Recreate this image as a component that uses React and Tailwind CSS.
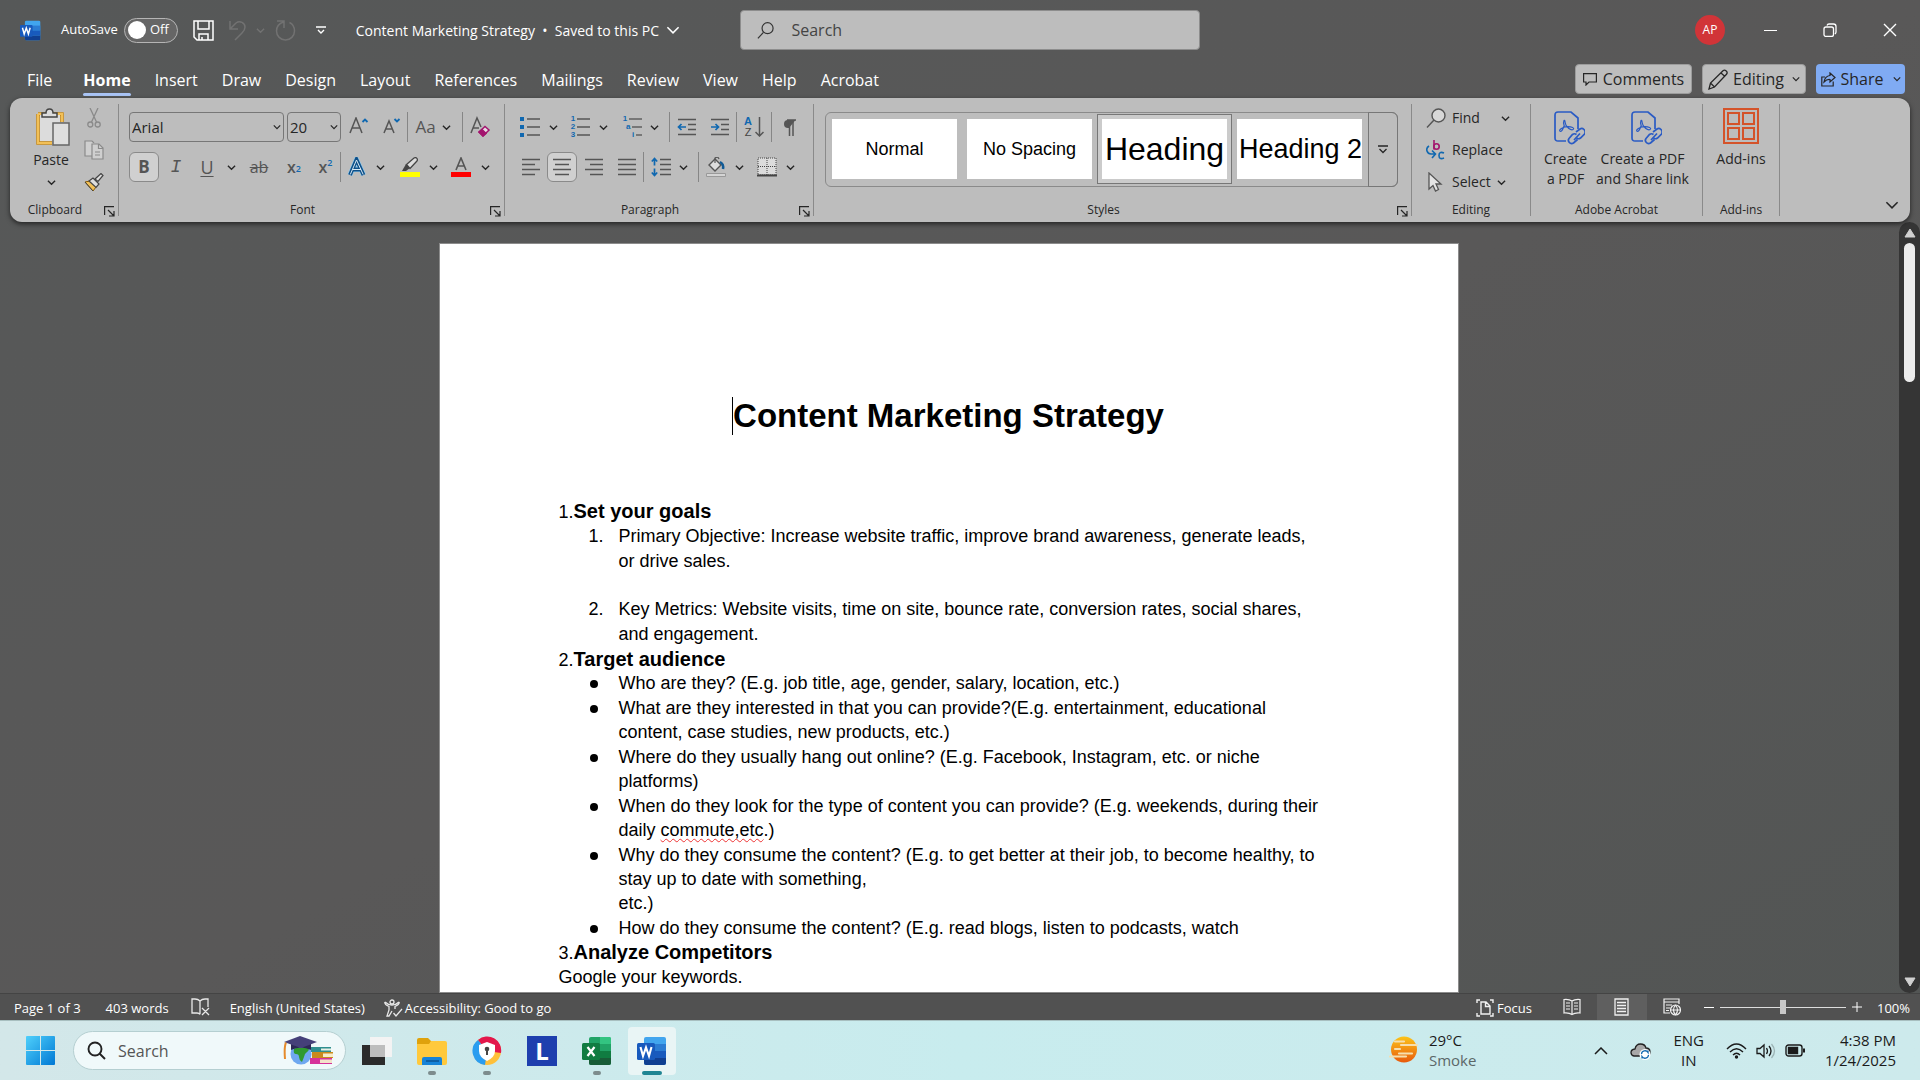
import React from "react";

const UI = "font-['Open_Sans','Noto_Sans',sans-serif]";
const DOC = "font-['Liberation_Sans',Arial,sans-serif]";

function Chevron({ className = "text-[#262626]", size = 9, stroke = 1.5 }) {
  return (
    <svg width={size} height={size} viewBox="0 0 10 10" className={`shrink-0 ${className}`} fill="none" stroke="currentColor" strokeWidth={stroke} aria-hidden="true">
      <path d="M1 3l4 4 4-4" />
    </svg>
  );
}

function Cell({ label, className = "w-8", children }) {
  return (
    <button type="button" aria-label={label} className={`flex h-[30px] shrink-0 items-center justify-center ${className}`}>
      {children}
    </button>
  );
}

function Rule({ className = "" }) {
  return <span className={`h-[30px] w-px shrink-0 bg-[#868686] ${className}`} />;
}

function Group({ title, launcher, className, children }) {
  return (
    <section aria-label={title} className={`flex h-28 shrink-0 flex-col justify-between border-r border-[#8a8a8a] ${className}`}>
      {children}
      <footer className="flex h-[13px] items-center text-xs leading-[14px]">
        <span className={`flex-1 text-center ${launcher ? "pr-1" : ""}`}>{title}</span>
        {launcher && (
          <button type="button" aria-label={`${title} settings`} className="mr-[2px] flex h-[14px] w-3 items-end">
            <svg width="11" height="11" viewBox="0 0 11 11" fill="none" stroke="#262626" strokeWidth="1.2">
              <path d="M.6 9V.6H10M4 4l5.5 5.5M10 5v5H5" />
            </svg>
          </button>
        )}
      </footer>
    </section>
  );
}

function Lines({ rows }) {
  return (
    <svg width="20" height="20" viewBox="0 0 20 20" stroke="#555" strokeWidth="1.5" aria-hidden="true">
      {rows.map(([a, b], i) => (
        <path key={i} d={`M${a} ${2.5 + i * 5}H${b}`} />
      ))}
    </svg>
  );
}

function WordLogo({ size }) {
  return (
    <svg width={size} height={size} viewBox="0 0 30 30" aria-hidden="true">
      <rect x="7" y="1" width="22" height="28" rx="2" fill="#41a5ee" />
      <path d="M7 8h22v7H7z" fill="#2b7cd3" />
      <path d="M7 15h22v7H7z" fill="#185abd" />
      <path d="M7 22h22v5a2 2 0 0 1-2 2H9a2 2 0 0 1-2-2z" fill="#103f91" />
      <rect x="0" y="7" width="18" height="17" rx="1.500" fill="#185abd" />
      <path d="M3.500 11l2.500 9L9 11.500l3 8.500 2.500-9" fill="none" stroke="#fff" strokeWidth="2.100" />
    </svg>
  );
}

function ExcelLogo() {
  return (
    <svg width="30" height="30" viewBox="0 0 30 30" aria-hidden="true">
      <rect x="7" y="1" width="22" height="28" rx="2" fill="#21a366" />
      <path d="M18 1h9a2 2 0 0 1 2 2v5H18z" fill="#33c481" />
      <path d="M7 8h11v7H7z" fill="#107c41" />
      <path d="M18 15h11v7H18z" fill="#107c41" />
      <path d="M7 15h11v7h11v5a2 2 0 0 1-2 2H9a2 2 0 0 1-2-2z" fill="#185c37" />
      <rect x="0" y="7" width="18" height="17" rx="1.500" fill="#107c41" />
      <path d="M5.500 11l7 9M12.500 11l-7 9" stroke="#fff" strokeWidth="2.200" />
    </svg>
  );
}

function TitleBar() {
  return (
    <header className="grid h-[60px] grid-cols-[740px_minmax(200px,460px)_1fr] items-center text-white">
      <div className="flex items-center pl-5">
        <WordLogo size={21} />
        <label className="ml-5 flex items-center gap-[6px] text-[13px]">
          AutoSave
          <span className="flex h-[25px] w-[54px] items-center justify-between rounded-full border border-[#b5b5b5] bg-[#666] pr-2 pl-[3px]">
            <input type="checkbox" className="h-[18px] w-[18px] appearance-none rounded-full bg-white" />
            <span>Off</span>
          </span>
        </label>
        <button type="button" aria-label="Save" className="ml-[15px]">
          <svg width="21" height="21" viewBox="0 0 21 21" fill="none" stroke="#fff" strokeWidth="1.500">
            <path d="M1 1h19v19H4l-3-3zM5 1v8h11V1M6 20v-6h9v6M9 20v-3" />
          </svg>
        </button>
        <button type="button" aria-label="Undo" className="ml-[14px] flex items-center gap-2">
          <svg width="20" height="21" viewBox="0 0 20 21" fill="none" stroke="#727272" strokeWidth="1.500">
            <path d="M2 1v8h8M2 9l6-6c4-3 9 0 9 4 0 3-1 4-3 6l-7 7" />
          </svg>
          <Chevron className="text-[#727272]" />
        </button>
        <button type="button" aria-label="Redo" className="ml-[10px]">
          <svg width="21" height="21" viewBox="0 0 21 21" fill="none" stroke="#727272" strokeWidth="1.500">
            <path d="M2 1h7v7M8.500 2C4 3.500 1.500 7 1.500 11a9 9 0 0 0 18 0c0-4-2-7-5-8.500" />
          </svg>
        </button>
        <button type="button" aria-label="Customize toolbar" className="ml-5">
          <svg width="10" height="9" viewBox="0 0 10 9" fill="none" stroke="#fff" strokeWidth="1.400">
            <path d="M0 1h10M2 4l3 3 3-3" />
          </svg>
        </button>
        <button type="button" className="ml-[30px] flex items-center gap-[7px] text-[14px] whitespace-nowrap">
          Content Marketing Strategy&nbsp; •&nbsp; Saved to this PC
          <Chevron className="text-white" size={14} stroke={1.1} />
        </button>
      </div>
      <label className="flex h-10 items-center gap-[17px] rounded border border-[#8d8d8d] bg-[#bdbdbd] px-4">
        <svg width="19" height="19" viewBox="0 0 19 19" fill="none" stroke="#333" strokeWidth="1.300" aria-hidden="true">
          <circle cx="11.500" cy="7" r="6" />
          <path d="M7 11.500L1 18" />
        </svg>
        <input aria-label="Search" placeholder="Search" className="w-full bg-transparent text-base outline-none placeholder:text-[#444]" />
      </label>
      <div className="flex items-center justify-end">
        <button type="button" aria-label="Account" className="mr-[15px] flex h-[30px] w-[30px] items-center justify-center rounded-full bg-[#d13438] text-xs">AP</button>
        <button type="button" aria-label="Minimize" className="flex h-10 w-[60px] items-center justify-center">
          <span className="h-px w-[13px] bg-white" />
        </button>
        <button type="button" aria-label="Restore" className="flex h-10 w-[60px] items-center justify-center">
          <svg width="14" height="14" viewBox="0 0 14 14" fill="none" stroke="#fff" strokeWidth="1.300">
            <rect x="1" y="4" width="9.500" height="9.500" rx="2" />
            <path d="M4 2.500Q4.500 1 6 1h4.500Q13 1 13 3.500V9Q13 10 12 11" />
          </svg>
        </button>
        <button type="button" aria-label="Close" className="flex h-10 w-[60px] items-center justify-center">
          <svg width="14" height="14" viewBox="0 0 14 14" stroke="#fff" strokeWidth="1.400">
            <path d="M1 1l12 12M13 1L1 13" />
          </svg>
        </button>
      </div>
    </header>
  );
}

const TABS = ["File", "Home", "Insert", "Draw", "Design", "Layout", "References", "Mailings", "Review", "View", "Help", "Acrobat"];

function TabBar() {
  return (
    <nav aria-label="Ribbon tabs" className="flex h-[38px] items-center pr-[15px] pl-[27px]">
      <div className="flex gap-6 text-base leading-[34px] text-white">
        {TABS.map((tab) =>
          tab === "Home" ? (
            <button key={tab} type="button" className="relative ml-[7px] h-[33px] font-bold">
              {tab}
              <span className="absolute bottom-0 left-0 h-[3px] w-full rounded-full bg-[#a9c4f5]" />
            </button>
          ) : (
            <button key={tab} type="button" className="h-[33px]">{tab}</button>
          )
        )}
      </div>
      <div className="ml-auto flex gap-[10px] text-base text-[#262626]">
        <button type="button" className="flex h-[30px] w-[117px] items-center justify-center gap-[6px] rounded border border-[#9c9c9c] bg-[#bdbdbd]">
          <svg width="14" height="13" viewBox="0 0 14 13" fill="none" stroke="#262626" strokeWidth="1.200">
            <path d="M.6.6h12.800v8.400H6L3 12V9H.6z" />
          </svg>
          Comments
        </button>
        <button type="button" className="flex h-[30px] w-[104px] items-center justify-center gap-1 rounded border border-[#9c9c9c] bg-[#bdbdbd]">
          <svg width="21" height="21" viewBox="0 0 21 21" fill="none" stroke="#262626" strokeWidth="1.300">
            <path d="M1 20l1.500-6L15 1.800q1.500-1.300 3.200.2t.3 3.300L6.500 18zM2.500 14L6.500 18M13 4l4 3.500" />
          </svg>
          Editing
          <Chevron className="ml-1 text-[#262626]" size={8} />
        </button>
        <button type="button" className="flex h-[30px] w-[89px] items-center justify-center gap-[5px] rounded bg-[#80abf3]">
          <svg width="15" height="15" viewBox="0 0 15 15" fill="none" stroke="#262626" strokeWidth="1.200">
            <path d="M4 5H.8v9h11.400V9.500M9 1l5 4.500L9 10V7.500Q6 7 3 10 4 4 9 3.500z" />
          </svg>
          Share
          <Chevron className="ml-1 text-[#262626]" size={8} />
        </button>
      </div>
    </nav>
  );
}

function ClipboardGroup() {
  return (
    <Group title="Clipboard" launcher className="w-[109px]">
      <div className="flex">
        <button type="button" className="ml-[22px] flex w-[38px] flex-col items-center pt-1 text-sm">
          <svg width="38" height="38" viewBox="-4 0 38 38" aria-hidden="true">
            <path d="M2 6h24v8M16 35H2V6" fill="none" stroke="#ca8a16" strokeWidth="3.500" />
            <path d="M2 6h24v8M16 35H2V6" fill="none" stroke="#f2c057" strokeWidth="2" />
            <path d="M4 7h20v26H4z" fill="#dcdcdc" />
            <path d="M6 9V5h4q0-4 3.500-4T17 5h4v4z" fill="#dcdcdc" stroke="#444" strokeWidth="1.500" />
            <rect x="17" y="15" width="16" height="22" fill="#dedede" stroke="#666" strokeWidth="1.500" />
          </svg>
          <span className="mt-1 leading-5">Paste</span>
          <span className="mt-2"><Chevron /></span>
        </button>
        <div className="ml-3 flex flex-col gap-1">
          <button type="button" aria-label="Cut" className="flex h-7 w-6 items-center justify-center">
            <svg width="14" height="20" viewBox="0 0 14 20" fill="none" stroke="#8a8a8a" strokeWidth="1.300">
              <path d="M3 0l6.500 14M11 0L4.500 14" />
              <circle cx="3.300" cy="16.500" r="2.500" />
              <circle cx="10.700" cy="16.500" r="2.500" />
            </svg>
          </button>
          <button type="button" aria-label="Copy" className="flex h-7 w-6 items-center justify-center">
            <svg width="20" height="20" viewBox="0 0 20 20" fill="#cfcfcf" stroke="#8a8a8a" strokeWidth="1.200">
              <path d="M8 16H1V1h7l2 2" />
              <path d="M8 4h7l4 4v11H8z" />
              <path d="M14.500 4v4.500H19M11 12h5M11 15h5" fill="none" />
            </svg>
          </button>
          <button type="button" aria-label="Format Painter" className="flex h-7 w-6 items-center justify-center">
            <svg width="20" height="19" viewBox="0 0 20 19" aria-hidden="true">
              <path d="M1 9l5-1 6 6-3 4z" fill="#f2c057" stroke="#8a5a00" strokeWidth="1" />
              <path d="M5 8l4-3 6 6-3 3.500z" fill="#ddd" stroke="#444" strokeWidth="1.200" />
              <path d="M11 6l6-5.500 2 2L14 8.500z" fill="#ddd" stroke="#444" strokeWidth="1.200" />
              <path d="M1 9l8 9" stroke="#444" />
            </svg>
          </button>
        </div>
      </div>
    </Group>
  );
}

function Combo({ label, value, className }) {
  return (
    <span className={`flex h-[30px] shrink-0 items-center rounded border border-[#777] pr-[2px] pl-[2px] ${className}`}>
      <select aria-label={label} className="w-full min-w-0 appearance-none bg-transparent text-[15px] outline-none">
        <option>{value}</option>
      </select>
      <Chevron size={8} />
    </span>
  );
}

function FontGroup() {
  return (
    <Group title="Font" launcher className="w-[386px]">
      <div className="flex flex-col gap-[10px] pt-2 pl-[10px] text-[#555]">
        <div className="flex items-center text-[#262626]">
          <Combo label="Font name" value="Arial" className="w-[155px]" />
          <Combo label="Font size" value="20" className="ml-[3px] w-[54px]" />
          <Cell label="Increase font size" className="w-[35px]">
            <svg width="20" height="20" viewBox="0 0 20 20" fill="none" stroke="#555" strokeWidth="1.500"><path d="M1 16L7 1l6 15M3.500 11h7.500" /><path d="M13.500 5L16 2.500 18.500 5" stroke="#1068b0" strokeWidth="1.800" /></svg>
          </Cell>
          <Cell label="Decrease font size" className="w-[31px]">
            <svg width="18" height="20" viewBox="0 0 18 20" fill="none" stroke="#555" strokeWidth="1.500"><path d="M1 16L6 4l5 12M3 12h6" /><path d="M11.500 2L14 4.500 16.500 2" stroke="#1068b0" strokeWidth="1.800" /></svg>
          </Cell>
          <Rule />
          <Cell label="Change case" className="w-[54px] gap-[6px] pr-1">
            <span className="text-[17px] text-[#555]">Aa</span><Chevron />
          </Cell>
          <Rule />
          <Cell label="Clear formatting" className="w-[34px]">
            <svg width="21" height="22" viewBox="0 0 21 22" fill="none" stroke="#555" strokeWidth="1.500">
              <path d="M1 17L7 2l4 9M3 12h6" />
              <path d="M9 16l6-5.500 4 3.500-6 6z" fill="#e8dbe4" stroke="#a3146e" />
              <path d="M9 16l3-2.500 4 4-3 2.500z" fill="#a3146e" stroke="#a3146e" />
            </svg>
          </Cell>
        </div>
        <div className="flex items-center text-lg">
          <Cell label="Bold" className="w-[30px] rounded-md border border-[#8a8a8a] bg-[#d0d0d0] text-[17px] font-bold">B</Cell>
          <Cell label="Italic" className="w-[34px] font-['Liberation_Mono',monospace] italic">I</Cell>
          <Cell label="Underline" className="w-7 underline underline-offset-2">U</Cell>
          <Cell label="Underline style" className="w-5"><Chevron /></Cell>
          <Cell label="Strikethrough" className="w-9 text-base line-through">ab</Cell>
          <Cell label="Subscript" className="w-[34px] text-base font-semibold">x<sub className="text-[9px] text-[#1068b0]">2</sub></Cell>
          <Cell label="Superscript" className="w-[29px] text-base font-semibold">x<sup className="text-[9px] text-[#1068b0]">2</sup></Cell>
          <Rule />
          <Cell label="Text effects" className="w-8">
            <svg width="20" height="20" viewBox="0 0 20 20" fill="none"><path d="M3 18L9.500 2.500 16.500 18M5.500 12.500h8.500" stroke="#8ccaf0" strokeWidth="5" /><path d="M3 18L9.500 2.500 16.500 18M5.500 12.500h8.500" stroke="#0f4f87" strokeWidth="3.800" /><path d="M3.300 17.500L9.500 3 16.200 17.500M5.500 12.500h8.500" stroke="#d6e8f4" strokeWidth="1" /></svg>
          </Cell>
          <Cell label="Text effect style" className="w-[14px]"><Chevron /></Cell>
          <Cell label="Highlight colour" className="ml-[6px] w-[34px]">
            <svg width="20" height="20" viewBox="0 0 20 20"><path d="M2 14l4-7 4 4-4 3z" fill="#444" /><path d="M6.500 7.500L14 1q2-1 3 .5t-.5 3L10 11.500z" fill="#ddd" stroke="#444" strokeWidth="1.300" /><path d="M0 15h20v5H0z" fill="#ff0" /></svg>
          </Cell>
          <Cell label="Highlight options" className="w-3"><Chevron /></Cell>
          <Cell label="Font colour" className="ml-1 w-9">
            <svg width="20" height="20" viewBox="0 0 20 20"><path d="M5 13L10 1l5 12M6.500 9h7" fill="none" stroke="#555" strokeWidth="1.600" /><path d="M0 15h20v5H0z" fill="red" /></svg>
          </Cell>
          <Cell label="Font colour options" className="w-3"><Chevron /></Cell>
        </div>
      </div>
    </Group>
  );
}

function Indent({ flip }) {
  return (
    <svg width="20" height="20" viewBox="0 0 20 20" fill="none" stroke="#555" strokeWidth="1.500" aria-hidden="true">
      <path d="M1 2.500h18M11 7.500h8M11 12.500h8M1 17.500h18" />
      <path d={flip ? "M1 10h7M5.500 7L8.500 10l-3 3" : "M9 10H2M4.500 7l-3 3 3 3"} stroke="#1068b0" strokeWidth="1.700" />
    </svg>
  );
}

function ParagraphGroup() {
  return (
    <Group title="Paragraph" launcher className="w-[309px]">
      <div className="flex flex-col gap-[10px] pt-2 pl-[9px]">
        <div className="flex items-center">
          <Cell label="Bullets">
            <svg width="20" height="20" viewBox="0 0 20 20"><path d="M0 0h4v4H0zM0 8h4v4H0zM0 16h4v4H0z" fill="#1068b0" /><path d="M7 2h13M7 10h13M7 18h13" stroke="#555" strokeWidth="1.500" /></svg>
          </Cell>
          <Cell label="Bullet library" className="w-[14px]"><Chevron /></Cell>
          <Cell label="Numbering" className="ml-1 w-8">
            <span className={`flex w-[5px] flex-col text-[8px] leading-[8px] font-bold text-[#1068b0] ${DOC}`}><span>1</span><span>2</span><span>3</span></span>
            <svg width="14" height="20" viewBox="0 0 14 20"><path d="M1 2h13M1 10h13M1 18h13" stroke="#555" strokeWidth="1.500" /></svg>
          </Cell>
          <Cell label="Numbering library" className="w-[14px]"><Chevron /></Cell>
          <Cell label="Multilevel list" className="ml-[6px] w-8">
            <span className={`grid w-5 grid-cols-[6px_1fr] items-center text-[8px] leading-[8px] font-bold text-[#1068b0] ${DOC}`}>
              <span>1</span><span className="ml-px h-[2px] bg-[#777]" />
              <span className="col-span-2 flex items-center gap-[2px] pl-1">a<span className="h-[2px] flex-1 bg-[#777]" /></span>
              <span className="col-span-2 flex items-center gap-[2px] pl-[10px]">i<span className="h-[2px] flex-1 bg-[#777]" /></span>
            </span>
          </Cell>
          <Cell label="Multilevel library" className="w-3"><Chevron /></Cell>
          <Rule className="ml-[9px]" />
          <Cell label="Decrease indent" className="w-[34px]"><Indent /></Cell>
          <Cell label="Increase indent" className="w-8"><Indent flip /></Cell>
          <Rule />
          <Cell label="Sort" className="w-[34px] gap-[3px]">
            <span className={`flex flex-col text-[11px] leading-[11px] font-bold text-[#1068b0] ${DOC}`}><span>A</span><span className="font-normal text-[#444]">Z</span></span>
            <svg width="9" height="20" viewBox="0 0 9 20" fill="none" stroke="#555" strokeWidth="1.500"><path d="M4.500 0v19M.5 15l4 4 4-4" /></svg>
          </Cell>
          <Rule />
          <Cell label="Show paragraph marks" className="w-[34px]">
            <svg width="13" height="17" viewBox="0 0 13 17"><path d="M12.500 1H5a4 4 0 0 0 0 8h1z" fill="#555" /><path d="M6.500 1v16M10 1v16M4 1h9" stroke="#555" strokeWidth="1.500" /></svg>
          </Cell>
        </div>
        <div className="flex items-center">
          <Cell label="Align left" className="w-[33px]"><Lines rows={[[1, 19], [1, 14], [1, 19], [1, 14]]} /></Cell>
          <Cell label="Align centre" className="w-[30px] rounded-md border border-[#8a8a8a] bg-[#d0d0d0]"><Lines rows={[[1, 19], [3, 17], [1, 19], [3, 17]]} /></Cell>
          <Cell label="Align right" className="w-[34px]"><Lines rows={[[1, 19], [6, 19], [1, 19], [6, 19]]} /></Cell>
          <Cell label="Justify"><Lines rows={[[1, 19], [1, 19], [1, 19], [1, 19]]} /></Cell>
          <Rule />
          <Cell label="Line spacing" className="w-[34px]">
            <svg width="20" height="20" viewBox="0 0 20 20" fill="none" stroke="#555" strokeWidth="1.500"><path d="M9 2.500h11M9 7.500h11M9 12.500h11M9 17.500h11" /><path d="M3.500 1.500v7M3.500 11.500v7M.8 4.500l2.700-3 2.700 3M.8 15.500l2.700 3 2.700-3" stroke="#1068b0" strokeWidth="1.700" /></svg>
          </Cell>
          <Cell label="Line spacing options" className="w-[10px]"><Chevron /></Cell>
          <Rule className="ml-[10px]" />
          <Cell label="Shading" className="w-[34px]">
            <svg width="20" height="20" viewBox="0 0 20 20"><path d="M3 8l6-6 6 6-6 6z" fill="#ddd" stroke="#555" strokeWidth="1.400" /><path d="M9 6V1q3-2 4 1" fill="none" stroke="#555" strokeWidth="1.200" /><path d="M14 5q4 2 3 7" fill="none" stroke="#0f5a96" strokeWidth="2.500" /><path d="M.5 16.500h19v3H.5z" fill="#d4d4d4" stroke="#999" /></svg>
          </Cell>
          <Cell label="Shading options" className="w-3"><Chevron /></Cell>
          <Cell label="Borders" className="ml-[5px] w-[34px]">
            <svg width="20" height="20" viewBox="0 0 20 20"><path d="M1 1h18v16H1z" fill="#dcdcdc" /><path d="M1 1h18v17H1zM10 1v17M1 9.500h18" fill="none" stroke="#444" strokeDasharray="1 1" /><path d="M0 18.500h20" stroke="#444" strokeWidth="2" /></svg>
          </Cell>
          <Cell label="Border options" className="w-3"><Chevron /></Cell>
        </div>
      </div>
    </Group>
  );
}

const STYLES = [
  { name: "Normal", size: "text-lg justify-center" },
  { name: "No Spacing", size: "text-lg justify-center" },
  { name: "Heading", size: "text-[32px] justify-center", selected: true },
  { name: "Heading 2", size: "text-[27px] pl-[2px]" },
];

function StylesGroup() {
  return (
    <Group title="Styles" launcher className="min-w-0 flex-1">
      <div className="mt-2 mr-[13px] ml-[11px] flex h-[75px] rounded-md border border-[#8a8a8a] pl-px">
        {STYLES.map((s) => (
          <button key={s.name} type="button" className={`mt-px flex h-[70px] w-[135px] shrink-0 border p-1 ${DOC} ${s.selected ? "border-[#777] bg-[#cbcbcb]" : "border-transparent"}`}>
            <span className={`flex h-[60px] w-full items-center overflow-hidden bg-white whitespace-nowrap text-black ${s.size}`}>{s.name}</span>
          </button>
        ))}
        <button type="button" aria-label="More styles" className="-my-px ml-auto -mr-px flex w-[30px] items-center justify-center rounded-r-md border border-[#777]">
          <svg width="10" height="9" viewBox="0 0 10 9" fill="none" stroke="#262626" strokeWidth="1.300"><path d="M0 1h10M1.500 4L5 7.500 8.500 4" /></svg>
        </button>
      </div>
    </Group>
  );
}

function EditingGroup() {
  return (
    <Group title="Editing" className="w-[119px]">
      <div className="flex flex-col gap-1 pl-[14px] text-sm">
        <button type="button" className="flex h-7 items-center gap-[6px]">
          <svg width="20" height="20" viewBox="0 0 20 20" fill="none" stroke="#555" strokeWidth="1.400"><circle cx="12.500" cy="7.500" r="6.500" fill="#d8d8d8" /><path d="M8 12l-7 7.500" /></svg>
          Find
          <Chevron className="mr-5 ml-auto text-[#262626]" />
        </button>
        <button type="button" className="flex h-7 items-center gap-[6px]">
          <svg width="20" height="20" viewBox="0 0 20 20" fill="none" strokeWidth="1.600"><path d="M8 0v9.500" stroke="#a3146e" /><circle cx="10.500" cy="6.500" r="2.700" stroke="#a3146e" /><path d="M3 6Q0 8 1 11t4 3h4M6 10.500L9.500 14 6 18" stroke="#1068b0" /><path d="M18 13q-5-2-5 2.500T18 18" stroke="#1068b0" /></svg>
          Replace
        </button>
        <button type="button" className="flex h-7 items-center gap-[6px]">
          <svg width="20" height="20" viewBox="0 0 20 20"><path d="M3 1v16l4-3.500L9.500 19l3-1.500L10 12h5z" fill="#e4e4e4" stroke="#555" strokeWidth="1.300" /></svg>
          Select
          <Chevron />
        </button>
      </div>
    </Group>
  );
}

function PdfIcon() {
  return (
    <svg width="38" height="36" viewBox="-7 0 38 36" fill="none" stroke="#2a5bc4" strokeWidth="1.700" aria-hidden="true">
      <path d="M12 30H4q-3 0-3-3V4q0-3 3-3h13l7 6v11" />
      <path d="M6.500 20.500q-2-1 .5-2.800t6-2 5.500.8.500 2-4.500-1.300-3.300-5.500q-.5-3.500-1.300-2t.3 5q-2.200 5.800-3.700 5.800z" strokeWidth="1.200" />
      <path d="M22 21l4-3q2-1.500 4 .5t.5 4.500l-4 4q-2 1.500-4 0" />
      <path d="M22.500 23.500q-2-1.500-4 0l-3.500 4q-1.500 2 .3 4t4.200.5l4-3.500M20 29l6-6.500" />
    </svg>
  );
}

function Ribbon() {
  return (
    <div className="relative z-10 mx-[10px] flex h-[124px] items-start rounded-xl bg-[#bdbdbd] pt-[6px] text-[#262626] shadow-[0_2px_5px_rgba(0,0,0,0.6)]">
      <ClipboardGroup />
      <FontGroup />
      <ParagraphGroup />
      <StylesGroup />
      <EditingGroup />
      <Group title="Adobe Acrobat" className="w-[172px]">
        <div className="flex justify-center gap-[9px] pt-[7px] text-sm leading-5">
          <button type="button" className="flex flex-col items-center gap-[2px]">
            <PdfIcon />
            <span>Create<br />a PDF</span>
          </button>
          <button type="button" className="flex flex-col items-center gap-[2px] whitespace-nowrap">
            <PdfIcon />
            <span>Create a PDF<br />and Share link</span>
          </button>
        </div>
      </Group>
      <Group title="Add-ins" className="w-[77px]">
        <button type="button" className="flex flex-col items-center gap-[5px] pt-1 text-sm leading-5">
          <svg width="36" height="36" viewBox="0 0 36 36" fill="none" stroke="#d4532a" strokeWidth="2"><path d="M1 1h34v34H1zM5 5h11v11H5zM20 5h11v11H20zM5 20h11v11H5zM20 20h11v11H20z" /></svg>
          Add-ins
        </button>
      </Group>
      <div className="flex h-28 w-[130px] shrink-0 items-end justify-end pr-[11px] pb-1">
        <button type="button" aria-label="Collapse ribbon"><Chevron size={14} stroke={1.1} /></button>
      </div>
    </div>
  );
}

function Heading({ n, children }) {
  return (
    <h2 className="h-[25px] leading-[25px]">
      {n}.<b className="text-[20px]">{children}</b>
    </h2>
  );
}

const QUESTIONS = [
  ["Who are they? (E.g. job title, age, gender, salary, location, etc.)"],
  ["What are they interested in that you can provide?(E.g. entertainment, educational", "content, case studies, new products, etc.)"],
  ["Where do they usually hang out online? (E.g. Facebook, Instagram, etc. or niche", "platforms)"],
  [
    "When do they look for the type of content you can provide? (E.g. weekends, during their",
    <>daily <span className="underline decoration-[#e33] decoration-wavy decoration-1 underline-offset-2">commute,etc</span>.)</>,
  ],
  ["Why do they consume the content? (E.g. to get better at their job, to become healthy, to", "stay up to date with something,", "etc.)"],
  ["How do they consume the content? (E.g. read blogs, listen to podcasts, watch"],
];

function Document() {
  return (
    <main className="flex min-h-0 flex-1">
      <div className="flex min-w-0 flex-1 justify-center overflow-hidden pt-[21px] pr-[2px]">
        <article className={`w-[1020px] shrink-0 border border-[#8c8c8c] bg-white pt-[147px] pr-[100px] pl-[119px] text-lg whitespace-nowrap text-black ${DOC}`}>
          <h1 className="-ml-5 flex items-center justify-center text-[33px] leading-[50px] font-bold">
            <span className="h-[38px] w-px bg-black" />
            Content Marketing Strategy
          </h1>
          <div className="mt-[58px]">
            <Heading n={1}>Set your goals</Heading>
            <ol className="leading-[25px]">
              <li className="flex pl-[30px]"><span className="w-[30px]">1.</span><p>Primary Objective: Increase website traffic, improve brand awareness, generate leads,<br />or drive sales.</p></li>
              <li className="mt-[23px] flex pl-[30px]"><span className="w-[30px]">2.</span><p>Key Metrics: Website visits, time on site, bounce rate, conversion rates, social shares,<br />and engagement.</p></li>
            </ol>
            <Heading n={2}>Target audience</Heading>
            <ul className="-mt-px flex flex-col gap-px leading-6">
              {QUESTIONS.map((lines, i) => (
                <li key={i} className="flex pl-[31px]">
                  <span className="flex h-6 w-[29px] items-center"><span className="mt-[2px] h-2 w-2 rounded-full bg-black" /></span>
                  <p>{lines.map((line, j) => <span key={j} className="block h-6">{line}</span>)}</p>
                </li>
              ))}
            </ul>
            <Heading n={3}>Analyze Competitors</Heading>
            <p className="leading-[25px]">Google your keywords.</p>
          </div>
        </article>
      </div>
      <div aria-hidden="true" className="flex w-[21px] shrink-0 flex-col items-center justify-between rounded-t-xl rounded-b-xl bg-[#353535]">
        <div className="flex flex-col items-center gap-[5px] pt-[6px]">
          <svg width="12" height="10" viewBox="0 0 12 10"><path d="M6 1l5 8H1z" fill="#d0d0d0" stroke="#d0d0d0" strokeLinejoin="round" /></svg>
          <span className="h-[139px] w-[11px] rounded-full bg-[#ececec]" />
        </div>
        <svg className="mb-[6px]" width="12" height="10" viewBox="0 0 12 10"><path d="M6 9l5-8H1z" fill="#d0d0d0" stroke="#d0d0d0" strokeLinejoin="round" /></svg>
      </div>
    </main>
  );
}

function StatusBar() {
  return (
    <footer className="flex h-[27px] shrink-0 items-center border-t border-[#444] bg-[#515151] text-[13px] leading-[26px] text-white">
      <button type="button" className="ml-[14px] pt-px">Page 1 of 3</button>
      <button type="button" className="ml-[25px] pt-px">403 words</button>
      <button type="button" aria-label="Proofing" className="ml-[22px]">
        <svg width="19" height="18" viewBox="0 0 19 18" fill="none" stroke="#e8e8e8" strokeWidth="1.300"><path d="M9 16V3Q7 1 4 1H1v14h5q2 0 3 1.500M9 3q2-2 5-2h3v8M11 10l7 7M18 10l-7 7" /></svg>
      </button>
      <button type="button" className="ml-5 pt-px">English (United States)</button>
      <button type="button" className="ml-[19px] flex items-center gap-[2px] pt-px">
        <svg width="19" height="18" viewBox="0 0 19 18" fill="none" stroke="#e8e8e8" strokeWidth="1.300"><circle cx="8" cy="3" r="2" /><path d="M1 3q3 3 7 3t7-3M1 3q-1 2 4 4.500V11L3 17h2l3-5M15 3q1 2-4 4.500V10M9.500 14l2.500 3 6-7" /></svg>
        Accessibility: Good to go
      </button>
      <button type="button" className="ml-auto flex items-center gap-[3px] pt-px">
        <svg width="18" height="18" viewBox="0 0 18 18" fill="none" stroke="#f0f0f0" strokeWidth="1.400"><path d="M4 1H1v3M1 14v3h3M14 1h3v3M17 14v3h-3M5 3h5l4 4v8H5zM9.500 3v4.500H14" /></svg>
        Focus
      </button>
      <button type="button" aria-label="Read mode" className="ml-[15px] flex w-[50px] justify-center">
        <svg width="18" height="18" viewBox="0 0 18 18" fill="none" stroke="#f0f0f0" strokeWidth="1.200"><path d="M9 3Q6 1 1 1.500V15q5-.5 8 1.500 3-2 8-1.500V1.500Q12 1 9 3zM9 3v13M3 5h4M3 8h4M3 11h4M11 5h4M11 8h4M11 11h4" /></svg>
      </button>
      <button type="button" aria-label="Print layout" className="flex h-[26px] w-[50px] items-center justify-center bg-[#5f5f5f]">
        <svg width="15" height="18" viewBox="0 0 15 18" fill="none" stroke="#f0f0f0" strokeWidth="1.300"><path d="M1 1h13v16H1zM3 4.500h9M3 7.500h9M3 10.500h9M3 13.500h9" /></svg>
      </button>
      <button type="button" aria-label="Web layout" className="flex w-[50px] justify-center">
        <svg width="18" height="18" viewBox="0 0 18 18" fill="none" stroke="#f0f0f0" strokeWidth="1.200"><path d="M7 15H1V1h15v5M1 4h15M3 7h6M3 10h4M3 12.500h3" /><circle cx="12.500" cy="12" r="5" /><path d="M7.500 12h10M12.500 7q-4 5 0 10M12.500 7q4 5 0 10" /></svg>
      </button>
      <button type="button" aria-label="Zoom out" className="ml-[7px] flex h-4 w-[10px] items-center"><span className="h-px w-full bg-white" /></button>
      <input
        type="range"
        aria-label="Zoom"
        defaultValue="50"
        className="mx-[6px] h-4 w-[126px] appearance-none bg-transparent [&::-webkit-slider-runnable-track]:h-px [&::-webkit-slider-runnable-track]:bg-[#ddd] [&::-webkit-slider-thumb]:-mt-[7px] [&::-webkit-slider-thumb]:h-[14px] [&::-webkit-slider-thumb]:w-[6px] [&::-webkit-slider-thumb]:appearance-none [&::-webkit-slider-thumb]:bg-[#c8c8c8]"
      />
      <button type="button" aria-label="Zoom in">
        <svg width="10" height="10" viewBox="0 0 10 10" stroke="#fff"><path d="M0 5h10M5 0v10" /></svg>
      </button>
      <button type="button" className="mr-[10px] ml-[15px] pt-px">100%</button>
    </footer>
  );
}

function SearchArt() {
  return (
    <svg width="52" height="32" viewBox="0 0 52 32" aria-hidden="true">
      <circle cx="18" cy="19" r="10.500" fill="#6fa8f0" />
      <path d="M11 14q3-2 6-1l8-1q2 3-1 5t-3 5l-2 5q-3-2-3-5t-3-3-2-5z" fill="#2f9a2f" />
      <path d="M8 9q10-5 20 0v6q-10-5-20 0z" fill="#2c2955" />
      <path d="M1 7L17 1l17 6-16 6z" fill="#454079" />
      <path d="M3 7.500Q1 12 2 24" fill="none" stroke="#e58b2c" strokeWidth="2" />
      <path d="M28 12h20v5H28z" fill="#2f8f8f" /><path d="M38 13.500h10v2H38z" fill="#e8f0e6" />
      <path d="M29 17h21v6H29z" fill="#c98a1d" /><path d="M40 18.500h10V22H40z" fill="#f7ecc8" />
      <path d="M27 23h22v6H27z" fill="#d6339a" /><path d="M37 24.500h12V28H37z" fill="#f3e3ca" />
    </svg>
  );
}

function TaskButton({ label, mark = "", tile = "", children }) {
  return (
    <button type="button" aria-label={label} className={`flex h-12 w-12 flex-col items-center justify-end gap-[5px] rounded ${tile}`}>
      {children}
      <span className={`h-1 shrink-0 rounded-full ${mark || "w-2"}`} />
    </button>
  );
}

function Taskbar() {
  return (
    <footer className="flex h-[60px] shrink-0 items-center border-t border-[#a8bfc0] bg-linear-to-r from-[#d3e7e9] via-[#c8ecee] to-[#cdeaec] text-[#1b1b1b]">
      <button type="button" aria-label="Start" className="ml-[26px]">
        <svg width="29" height="29" viewBox="0 0 29 29">
          <defs><linearGradient id="win" x1="0" y1="0" x2="1" y2="1"><stop offset="0" stopColor="#4fd0fb" /><stop offset="1" stopColor="#0078d4" /></linearGradient></defs>
          <path d="M0 1q0-1 1-1h13v14H0zM15 0h13q1 0 1 1v13H15zM0 15h14v14H1q-1 0-1-1zM15 15h14v13q0 1-1 1H15z" fill="url(#win)" />
        </svg>
      </button>
      <label className="ml-[18px] flex h-[39px] w-[273px] items-center rounded-full border border-[#b5cfd1] bg-[#f0f9fa] pr-[10px] pl-[13px]">
        <svg width="19" height="19" viewBox="0 0 19 19" fill="none" stroke="#222" strokeWidth="1.900" aria-hidden="true"><circle cx="8" cy="8" r="6.500" /><path d="M12.500 12.500L18 18" /></svg>
        <input aria-label="Search Windows" placeholder="Search" className="ml-3 w-0 flex-1 bg-transparent text-base outline-none placeholder:text-[#555]" />
        <SearchArt />
      </label>
      <div className="ml-[7px] flex gap-[7px]">
        <TaskButton label="Task view">
          <svg width="30" height="30" viewBox="0 0 30 30"><path d="M0 9h23v20H0z" fill="#2b2b2b" /><path d="M8 1h22v20H8z" fill="#f3f3f3" /><path d="M8 9h15v12H8z" fill="#bdbdbd" /></svg>
        </TaskButton>
        <TaskButton label="File Explorer" mark="w-2 bg-[#7d8c8d]">
          <svg width="31" height="30" viewBox="0 0 31 30"><path d="M0 4q0-2 2-2h9l3 3v5H0z" fill="#dfa20c" /><path d="M0 8h12l2-3h14q2 0 2 2v20q0 2-2 2H2q-2 0-2-2z" fill="#ffc93c" /><path d="M5 29v-6q0-2 2-2h16q2 0 2 2v6z" fill="#1683d8" /><path d="M9 25h13" stroke="#0b5394" strokeWidth="1.500" /></svg>
        </TaskButton>
        <TaskButton label="Secure browser" mark="w-2 bg-[#7d8c8d]">
          <svg width="30" height="30" viewBox="0 0 30 30"><circle cx="15" cy="15" r="14" fill="#ffc03a" /><path d="M15 15L6 4A14 14 0 0 1 29 17z" fill="#e3174b" /><path d="M15 15L6 4a14 14 0 0 0 7 25z" fill="#2a9df0" /><path d="M15 6l8 3v6q0 6-8 10-8-4-8-10V9z" fill="#fff" /><circle cx="15" cy="13" r="2.300" fill="#444" /><path d="M15 13v6" stroke="#444" strokeWidth="2" /></svg>
        </TaskButton>
        <TaskButton label="L">
          <span className="flex h-[30px] w-[30px] items-center justify-center bg-[#1e3fae] text-2xl leading-none font-bold text-white">L</span>
        </TaskButton>
        <TaskButton label="Excel" mark="w-2 bg-[#7d8c8d]"><ExcelLogo /></TaskButton>
        <TaskButton label="Word" mark="w-5 bg-[#1f8593]" tile="bg-[#e9f5f5]"><WordLogo size={30} /></TaskButton>
      </div>
      <button type="button" className="ml-auto flex items-center gap-[10px] pb-[2px] text-left text-[15px] leading-5">
        <svg width="30" height="27" viewBox="0 0 30 27" aria-hidden="true">
          <defs><linearGradient id="sun" x1="0" y1="0" x2="0" y2="1"><stop offset="0" stopColor="#fcc419" /><stop offset="1" stopColor="#e8590c" /></linearGradient></defs>
          <circle cx="15" cy="13.500" r="13" fill="url(#sun)" />
          <path d="M6 5.500h9M12 9h16M6 13h5M10 17.500h13M1 20.500h16" stroke="#f6dfae" strokeWidth="2.200" strokeLinecap="round" />
        </svg>
        <span>29°C<br /><span className="text-[#5b6768]">Smoke</span></span>
      </button>
      <button type="button" aria-label="Hidden icons" className="ml-[118px]">
        <svg width="14" height="8" viewBox="0 0 14 8" fill="none" stroke="#1b1b1b" strokeWidth="1.500"><path d="M1 7l6-6 6 6" /></svg>
      </button>
      <button type="button" aria-label="OneDrive" className="ml-[22px]">
        <svg width="21" height="18" viewBox="0 0 21 18"><path d="M4 14q-3-.5-3-3.500T5 7q1-5 5.500-5T16 6q4 0 4 4t-3 4z" fill="#a8a8a8" stroke="#222" strokeWidth="1.300" /><circle cx="15" cy="12.500" r="5.500" fill="#fff" /><path d="M11.500 12a3.500 3.500 0 0 1 6.500-1.500V8.500M18.500 13a3.500 3.500 0 0 1-6.500 1.500v2" fill="none" stroke="#1068b0" strokeWidth="1.300" /></svg>
      </button>
      <button type="button" className="ml-[22px] pb-[2px] text-center text-[15px] leading-5">ENG<br />IN</button>
      <button type="button" aria-label="Network, sound and battery" className="ml-[22px] flex items-center gap-[9px]">
        <svg width="21" height="16" viewBox="0 0 21 16" fill="none" stroke="#1b1b1b" strokeWidth="1.400"><path d="M1 6q9.500-10 19 0M4 9q6.500-6.500 13 0M7 12q3.500-3.500 7 0" /><circle cx="10.500" cy="14" r="1" fill="#1b1b1b" /></svg>
        <svg width="20" height="16" viewBox="0 0 20 16" fill="none" stroke="#1b1b1b" strokeWidth="1.300"><path d="M1 5.500h3L8 2v12l-4-3.500H1zM10.500 5q2 3 0 6M13 3q4 5 0 10" /><path d="M15.500 1q6 7 0 14" stroke="#9db5b6" /></svg>
        <svg width="21" height="13" viewBox="0 0 21 13" fill="none" stroke="#1b1b1b" strokeWidth="1.400"><rect x="1" y="1" width="16" height="11" rx="2.500" /><path d="M3.500 3.500h9v6h-9z" fill="#1b1b1b" /><path d="M19 4.500v4" strokeWidth="2" /></svg>
      </button>
      <button type="button" className="mr-6 ml-[19px] pb-[2px] text-right text-[15px] leading-5">4:38 PM<br />1/24/2025</button>
    </footer>
  );
}

export default function App() {
  return (
    <div className={`flex h-screen min-w-[1500px] flex-col overflow-hidden bg-linear-to-br from-[#565858] via-[#595858] to-[#525554] ${UI}`}>
      <TitleBar />
      <TabBar />
      <Ribbon />
      <Document />
      <StatusBar />
      <Taskbar />
    </div>
  );
}
